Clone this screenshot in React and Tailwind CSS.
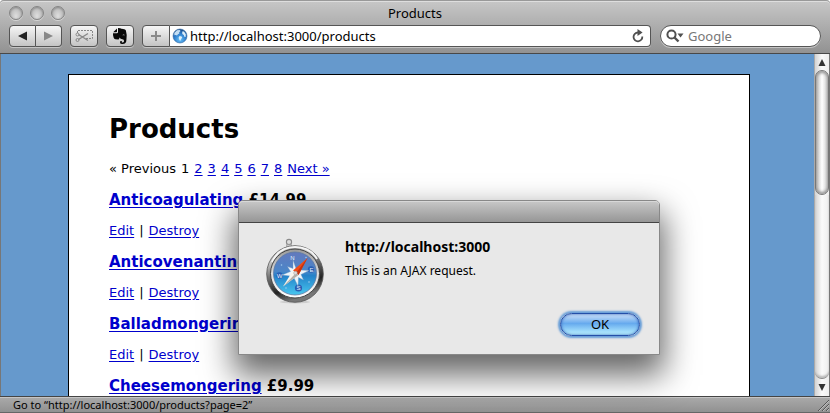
import React from 'react';

const products = [
  { name: 'Anticoagulating', price: '£14.99', actions: ['Edit', 'Destroy'] },
  { name: 'Anticovenanting', actions: ['Edit', 'Destroy'] },
  { name: 'Balladmongering', actions: ['Edit', 'Destroy'] },
  { name: 'Cheesemongering', price: '£9.99' },
];

const pages = [2, 3, 4, 5, 6, 7, 8];

const toolButton =
  'flex h-[22px] items-center justify-center border border-[#555] bg-linear-to-b from-[#f6f6f6] to-[#c4c4c4] shadow-[0_1px_0_#c4c4c4]';

function TrafficLight({ label }) {
  return (
    <button
      type="button"
      aria-label={label}
      className="size-[14px] rounded-full border border-[#858585] bg-radial-[at_50%_75%] from-[#dedede] to-[#aaaaaa] shadow-[0_1px_0_#d5d5d5,inset_0_1px_2px_#8a8a8a]"
    />
  );
}

function ClipIcon() {
  return (
    <svg width="18" height="14" viewBox="0 0 18 14" fill="none" stroke="#888">
      <path d="M2.5 4V1.5H17.5V9.5H11" strokeDasharray="2 1" />
      <path d="M3.5 5.5 13 11.5M13 4.5 3.5 10.5" strokeWidth="1.4" />
      <circle cx="2.5" cy="5.5" r="1.5" />
      <circle cx="2.5" cy="11" r="1.5" />
    </svg>
  );
}

function ElephantIcon() {
  return (
    <svg width="16" height="18" viewBox="0 0 16 18">
      <path
        fill="#080808"
        d="M5 1.5 1.2 5.2H4.2Q5 5.2 5 4.4ZM6 1V5Q6 6.2 4.8 6.2H1Q.8 8 1.6 10.5Q2.1 12.2 3.4 12.2L6.4 12.4Q7.4 12.4 7.4 10.5Q8.5 12.3 10.4 12.3Q12.1 12.4 12.1 14.1Q12.1 15.5 10.8 15.5H9.8V14.1Q8 13.5 8 15.2Q8 17.2 10.5 17.1Q14.4 17.1 14.4 13Q15.3 7.6 13.9 3.4Q13.5 2.2 11.2 2.1L9.4 1.8Q8.8 1 6 1Z"
      />
      <path d="M10.8 7.8Q12.2 6.8 12.9 8.4Q11.8 7.8 10.8 8.5Z" fill="#ddd" />
    </svg>
  );
}

function GlobeIcon() {
  return (
    <svg width="16" height="16" viewBox="0 0 16 16" className="shrink-0">
      <defs>
        <radialGradient id="globe" cx=".5" cy=".75" r=".75">
          <stop offset="0" stopColor="#66c1fa" />
          <stop offset=".6" stopColor="#2b78c8" />
          <stop offset="1" stopColor="#164784" />
        </radialGradient>
      </defs>
      <circle cx="8" cy="8" r="7" fill="url(#globe)" stroke="#376da5" strokeWidth=".6" />
      <path fill="#c4def3" d="M2.3 5 5 2.2 7.6 2 8.6 3 7.2 4.2 7.4 5.6 6 6.3 5 7.6 3.6 7 2.4 7.2Z" />
      <path fill="#dceefa" d="M7.5 8 9.6 8.6 10.2 9.6 9 11.2 8.2 13 7.2 11.6 6.6 9.8ZM10.2 3.5 12 3.4 13.8 6.3 13.6 9 12.3 8.7 11.8 7 10.3 6.1Z" />
    </svg>
  );
}

function Compass() {
  return (
    <svg width="62" height="68" viewBox="0 0 62 68" className="shrink-0" aria-label="Safari" role="img">
      <defs>
        <linearGradient id="rim" x1="0" y1="0" x2=".35" y2="1">
          <stop offset="0" stopColor="#747474" />
          <stop offset=".28" stopColor="#c9c9c9" />
          <stop offset=".5" stopColor="#777" />
          <stop offset=".8" stopColor="#222" />
          <stop offset="1" stopColor="#777" />
        </linearGradient>
        <linearGradient id="bezel" x1="0" y1="0" x2="0" y2="1">
          <stop offset="0" stopColor="#999" />
          <stop offset=".5" stopColor="#ddd" />
          <stop offset="1" stopColor="#fff" />
        </linearGradient>
        <linearGradient id="dial" x1="0" y1="0" x2="0" y2="1">
          <stop offset="0" stopColor="#6379bd" />
          <stop offset=".45" stopColor="#4b86c8" />
          <stop offset=".55" stopColor="#2482c9" />
          <stop offset="1" stopColor="#48c6ef" />
        </linearGradient>
      </defs>
      <ellipse cx="31" cy="65" rx="15" ry="1.5" fill="#bbb" opacity=".6" />
      <circle cx="25" cy="5" r="2.6" fill="#ddd" stroke="#8a8a8a" strokeWidth="1.1" />
      <path d="M22.5 7.5h5v3h-5z" fill="#c5c5c5" stroke="#888" strokeWidth=".5" />
      <circle cx="31" cy="37" r="28.3" fill="url(#rim)" stroke="#555" strokeWidth=".8" />
      <path d="M8 25Q15 10 31 10Q46 10 53 22" fill="none" stroke="#f5f5f5" strokeWidth="2" />
      <circle cx="31" cy="36.5" r="24.5" fill="url(#bezel)" stroke="#444" strokeWidth="1" />
      <circle cx="31" cy="36.5" r="21.5" fill="url(#dial)" stroke="#5c78a3" strokeWidth=".8" />
      <g fill="#2a5fb4">
        <circle cx="15.5" cy="38.5" r="3.2" />
        <circle cx="47" cy="32.5" r="3.2" />
        <circle cx="34.5" cy="51" r="3.6" />
      </g>
      <g fill="#9fcbee">
        <circle cx="17.5" cy="28" r=".8" />
        <circle cx="42" cy="20.5" r=".8" />
        <circle cx="45" cy="45" r=".8" />
        <circle cx="22" cy="51" r=".8" />
      </g>
      <g fill="#e8f2fc" fontFamily="Liberation Sans, sans-serif" fontSize="6" textAnchor="middle">
        <text x="28.5" y="22.5">N</text>
        <text x="34.5" y="53">S</text>
        <text x="47.5" y="34.5">E</text>
        <text x="15.5" y="40.5">W</text>
      </g>
      <path
        d="M29 23 32 31.5 38 28.5 36 33 45 33.5 37 37.5 39.5 43 34.5 40.5 34 49 30 41 23.5 44 26 39 18 38 26.5 34.5 23.5 29.5 29 31.5Z"
        fill="#edf6fc"
        stroke="#7397bd"
        strokeWidth=".4"
      />
      <path d="M43.5 21 34.5 38 29 33.5Z" fill="#f14a16" />
      <path d="M43.5 21 34.5 38 32 36Z" fill="#c4330e" />
      <path d="M19 49.5 29 33.5 34.5 38Z" fill="#f8f5ee" />
      <path d="M19 49.5 32 36 34.5 38Z" fill="#b5b0aa" />
      <circle cx="31.5" cy="36" r="1.8" fill="#ddd" stroke="#999" strokeWidth=".5" />
    </svg>
  );
}

function Toolbar() {
  return (
    <header className="h-[54px] shrink-0 rounded-t border-b border-[#484848] bg-linear-to-b from-[#c8c8c8] to-[#929292] px-[9px] shadow-[inset_0_1px_0_#999,inset_0_2px_0_#dedede]">
      <div className="grid h-[25px] grid-cols-[1fr_auto_1fr] items-center">
        <div className="flex gap-[7px]">
          <TrafficLight label="Close" />
          <TrafficLight label="Minimise" />
          <TrafficLight label="Zoom" />
        </div>
        <div className="text-[13px] leading-4">Products</div>
      </div>
      <div className="flex text-[13px]">
        <button type="button" aria-label="Back" className={`${toolButton} w-[27px] rounded-l`}>
          <svg width="10" height="10" viewBox="0 0 10 10"><path d="M0 5 9 .5V9.5Z" fill="#222" /></svg>
        </button>
        <button type="button" aria-label="Forward" className={`${toolButton} w-[26px] rounded-r border-l-0`}>
          <svg width="10" height="10" viewBox="0 0 10 10"><path d="M9 5 0 .5V9.5Z" fill="#888" /></svg>
        </button>
        <button type="button" aria-label="Web clip" className={`${toolButton} ml-2 w-7 rounded`}><ClipIcon /></button>
        <button type="button" aria-label="Clip page" className={`${toolButton} ml-2 w-7 rounded`}><ElephantIcon /></button>
        <button type="button" aria-label="Add bookmark" className={`${toolButton} ml-2 w-7 rounded-l`}>
          <svg width="12" height="12" viewBox="0 0 12 12"><path d="M6 1V11M1 6H11" stroke="#8a8a8a" strokeWidth="2" /></svg>
        </button>
        <div className="flex h-[22px] min-w-0 grow items-center rounded-r border border-l-0 border-[#555] bg-white pr-[6px] pl-[2px] shadow-[0_1px_0_#c4c4c4]">
          <GlobeIcon />
          <input
            type="text"
            aria-label="Address"
            defaultValue="http://localhost:3000/products"
            className="ml-[2px] min-w-0 grow bg-transparent pt-px outline-none"
          />
          <button type="button" aria-label="Reload">
            <svg width="12" height="14" viewBox="0 0 12 14">
              <path d="M10.3 7.5A4.4 4.4 0 1 1 6 3.5" fill="none" stroke="#505050" strokeWidth="1.8" />
              <path d="M5.5 0 10.6 3.5 5.5 7Z" fill="#505050" />
            </svg>
          </button>
        </div>
        <div className="ml-[9px] flex h-[22px] w-[161px] items-center rounded-full border border-[#555] bg-white pl-[5px] shadow-[0_1px_0_#c4c4c4]">
          <svg width="18" height="14" viewBox="0 0 18 14" className="shrink-0">
            <circle cx="5.5" cy="5.5" r="4.1" fill="none" stroke="#505050" strokeWidth="2" />
            <path d="M8.5 8.5 12.5 12.5" stroke="#505050" strokeWidth="2.4" />
            <path d="M11.5 4.5H17.5L14.5 8.5Z" fill="#505050" />
          </svg>
          <input type="search" aria-label="Search" placeholder="Google" className="ml-1 w-full min-w-0 bg-transparent pt-px outline-none placeholder:text-[#777]" />
        </div>
      </div>
    </header>
  );
}

function Scrollbar() {
  return (
    <div className="flex w-[15px] shrink-0 flex-col border-l border-[#aaa] bg-linear-to-r from-[#d3d3d3] via-[#fafafa] to-[#eee]">
      <button type="button" aria-label="Scroll up" className="flex h-4 items-center justify-center">
        <svg width="8" height="7" viewBox="0 0 8 7"><path d="M4 0 7.5 7H.5Z" fill="#333" /></svg>
      </button>
      <div className="h-[125px] rounded-full border border-[#777] bg-linear-to-r from-[#bbb] via-white to-[#ccc] shadow-[inset_0_2px_3px_#999,inset_0_-2px_3px_#999]" />
      <div className="grow rounded-b-full border-b border-[#888] shadow-[inset_0_-2px_2px_#bbb]" />
      <button type="button" aria-label="Scroll down" className="flex h-[17px] items-center justify-center">
        <svg width="8" height="7" viewBox="0 0 8 7"><path d="M4 7 .5 0H7.5Z" fill="#333" /></svg>
      </button>
    </div>
  );
}

const link = 'text-[#0000cc] underline underline-offset-2';

function ProductsPage() {
  return (
    <main className="min-w-0 grow overflow-hidden bg-[#6699cc] pt-5 pr-16 pl-[67px] font-['DejaVu_Sans',sans-serif] text-[13px] leading-[18px]">
      <div className="min-h-full border border-black bg-white px-10 pt-9">
        <h1 className="text-[26px] leading-9 font-bold">Products</h1>
        <nav aria-label="Pagination" className="mt-[13px] flex gap-[5px]">
          <span>« Previous</span>
          <span>1</span>
          {pages.map((page) => (
            <a key={page} href={`#page-${page}`} className={link}>{page}</a>
          ))}
          <a href="#next" className={link}>Next »</a>
        </nav>
        {products.map((product) => (
          <section key={product.name} className="mt-3">
            <h2 className="text-[15px] leading-5 font-bold">
              <a href="#product" className={link}>{product.name}</a> {product.price}
            </h2>
            {product.actions && (
              <p className="mt-3 flex gap-[5px]">
                <a href="#edit" className={link}>{product.actions[0]}</a>
                <span>|</span>
                <a href="#destroy" className={link}>{product.actions[1]}</a>
              </p>
            )}
          </section>
        ))}
      </div>
    </main>
  );
}

function AlertDialog() {
  return (
    <div
      role="alertdialog"
      aria-labelledby="alert-title"
      aria-describedby="alert-text"
      className="absolute top-[200px] left-[238px] w-[422px] rounded-t-[5px] border border-[#888] bg-[#e8e8e8] shadow-[0_16px_32px_4px_rgba(0,0,0,0.6)]"
    >
      <div className="h-[22px] rounded-t border-b border-[#444] bg-linear-to-b from-[#c8c8c8] to-[#969696] shadow-[inset_0_1px_0_#d8d8d8]" />
      <div className="flex gap-[19px] pt-[14px] pl-[25px]">
        <Compass />
        <div className="pt-px">
          <h2 id="alert-title" className="text-[14px] leading-[18px] font-bold">http://localhost:3000</h2>
          <p id="alert-text" className="mt-[7px] text-[12px] leading-4">This is an AJAX request.</p>
        </div>
      </div>
      <div className="flex justify-end pt-2 pr-[19px] pb-[18px]">
        <button
          type="button"
          className="flex h-[23px] w-20 justify-center rounded-full border border-[#244fa8] bg-linear-to-b from-[#cfe2f8] from-0% via-[#66aaee] via-45% to-[#bdf5ff] text-[13px] leading-5 shadow-[0_0_2px_2px_#689ed8,inset_0_0_3px_#315eb5]"
        >
          OK
        </button>
      </div>
    </div>
  );
}

export default function App() {
  return (
    <div className="relative flex h-screen flex-col overflow-hidden bg-white font-['Noto_Sans','Open_Sans',sans-serif] text-black">
      <Toolbar />
      <div className="flex min-h-0 grow border-x border-[#777]">
        <ProductsPage />
        <Scrollbar />
      </div>
      <footer className="flex h-[17px] shrink-0 items-center justify-between border-t border-b border-t-[#444] border-b-[#666] bg-linear-to-b from-[#aaa] to-[#919191] pl-[13px] text-[11px] leading-[15px] shadow-[inset_0_1px_0_#c5c5c5]">
        <span>Go to “http://localhost:3000/products?page=2”</span>
        <svg width="14" height="14" viewBox="0 0 14 14">
          <path d="M2 13 13 2M6 13 13 6M10 13 13 10" stroke="#555" />
          <path d="M3 13 13 3M7 13 13 7M11 13 13 11" stroke="#ccc" strokeWidth=".7" />
        </svg>
      </footer>
      <AlertDialog />
    </div>
  );
}
